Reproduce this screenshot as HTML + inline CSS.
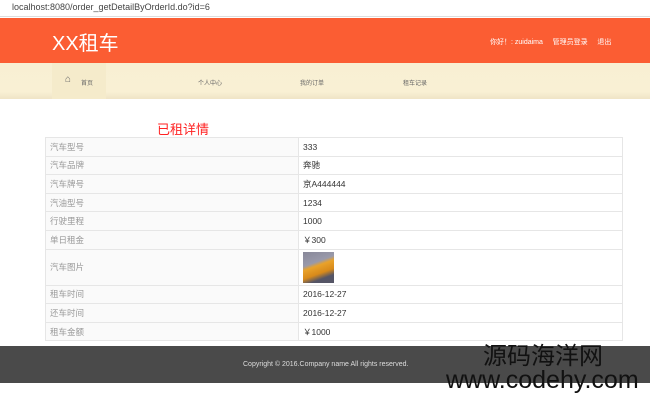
<!DOCTYPE html>
<html><head><meta charset="utf-8"><style>
*{margin:0;padding:0;box-sizing:border-box}
body{width:650px;height:400px;overflow:hidden;background:#fff;font-family:"Liberation Sans","Noto Sans CJK SC",sans-serif;position:relative}
.url{height:17px;background:#fff;border-bottom:1px solid #ddd;font-size:9px;color:#444;line-height:14px;padding-left:12px}
.hd{position:absolute;top:18px;left:0;width:650px;height:45px;background:#fb5d33}
.logo{position:absolute;left:52px;top:9px;color:#fff;font-size:20px}
.hr{position:absolute;top:19px;font-size:7px;color:#fff;left:490px;white-space:nowrap}
.nav{position:absolute;top:63px;left:0;width:650px;height:36px;background:linear-gradient(#f8efd3,#f9f0d4 80%,#efe4c6)}
.nav span{position:absolute;top:15px;font-size:6px;color:#666}
.home{position:absolute;left:52px;top:0;width:54px;height:36px;background:#f5ebcb}
h2{position:absolute;top:119px;left:157px;font-size:13px;color:#f22;font-weight:normal}
table{position:absolute;top:137px;left:45px;width:578px;border-collapse:collapse;font-size:8.5px}
td{border:1px solid #e6e6e6;height:18.6px;padding-left:4px}
td:first-child{width:253px;color:#999;background:#fafafa}
td:last-child{color:#333;background:#fff}
.ft{position:absolute;top:346px;left:0;width:650px;height:37px;background:#4a4a4a;color:#ddd;font-size:7px}
.wm{position:absolute;color:#111;font-family:"Liberation Sans","Noto Sans CJK SC",sans-serif;white-space:nowrap;line-height:1}
</style></head><body>
<div class="url">localhost:8080/order_getDetailByOrderId.do?id=6</div>
<div class="hd"><div class="logo">XX租车</div><div class="hr">你好！: zuidaima &nbsp;&nbsp;&nbsp; 管理员登录 &nbsp;&nbsp;&nbsp; 退出</div></div>
<div class="nav"><div class="home"></div><span style="left:65px;font-size:10px;top:11px">⌂</span><span style="left:81px">首页</span><span style="left:198px">个人中心</span><span style="left:300px">我的订单</span><span style="left:403px">租车记录</span></div>
<h2>已租详情</h2>
<table>
<tr><td>汽车型号</td><td>333</td></tr>
<tr><td>汽车品牌</td><td>奔驰</td></tr>
<tr><td>汽车牌号</td><td>京A444444</td></tr>
<tr><td>汽油型号</td><td>1234</td></tr>
<tr><td>行驶里程</td><td>1000</td></tr>
<tr><td>单日租金</td><td>￥300</td></tr>
<tr><td style="height:36px">汽车图片</td><td><div style="width:31px;height:31px;background:linear-gradient(160deg,#889 0,#99a 35%,#e9a22a 45%,#d88a1a 65%,#556 80%);"></div></td></tr>
<tr><td>租车时间</td><td>2016-12-27</td></tr>
<tr><td>还车时间</td><td>2016-12-27</td></tr>
<tr><td>租车金额</td><td>￥1000</td></tr>
</table>
<div class="ft"><div style="position:absolute;left:243px;top:15px">Copyright © 2016.Company name All rights reserved.</div></div>
<div class="wm" style="top:345px;left:483px;font-size:24px">源码海洋网</div>
<div class="wm" style="top:368px;left:446px;font-size:25px">www.codehy.com</div>
</body></html>
